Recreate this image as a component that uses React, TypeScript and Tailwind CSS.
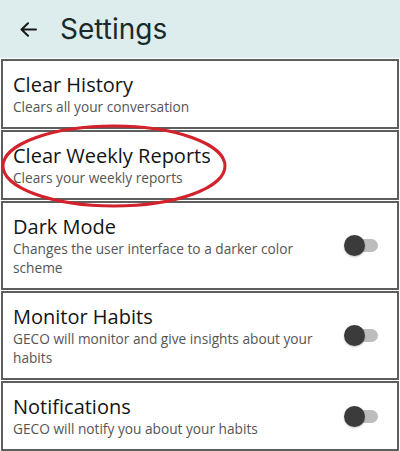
import React, { useState } from 'react';

type Setting = {
  title: string;
  desc: string;
  toggle?: boolean;
};

const settings: Setting[] = [
  { title: 'Clear History', desc: 'Clears all your conversation' },
  { title: 'Clear Weekly Reports', desc: 'Clears your weekly reports' },
  { title: 'Dark Mode', desc: 'Changes the user interface to a darker color scheme', toggle: true },
  { title: 'Monitor Habits', desc: 'GECO will monitor and give insights about your habits', toggle: true },
  { title: 'Notifications', desc: 'GECO will notify you about your habits', toggle: true },
];

const Toggle: React.FC<{ on: boolean; onChange: () => void }> = ({ on, onChange }) => (
  <button type="button" onClick={onChange} className="relative w-[34px] h-[21px] shrink-0">
    <span className="absolute left-[1px] right-0 top-[4px] h-[13px] rounded-full bg-[#bdbdbd]" />
    <span
      className={`absolute top-0 w-[21px] h-[21px] rounded-full bg-[#3b3b3b] shadow-[0_1px_2px_rgba(0,0,0,0.25)] ${
        on ? 'left-[13px]' : 'left-0'
      }`}
    />
  </button>
);

export default function App() {
  const [flags, setFlags] = useState<Record<string, boolean>>({});

  return (
    <div className="w-[400px] h-[451px] bg-white overflow-hidden relative" style={{ fontFamily: '"Open Sans", sans-serif' }}>
      <header className="h-[58px] bg-[#ddeded] flex items-center pl-5 gap-[23px]">
        <svg width="17" height="15" viewBox="0 0 17 15" fill="none" stroke="#1a1a1a" strokeWidth="2" strokeLinecap="round" strokeLinejoin="round">
          <path d="M16 7.5H1.5M8 1.2L1.5 7.5L8 13.8" />
        </svg>
        <h1 className="text-[28px] leading-none text-[#1c2929]" style={{ fontFamily: 'Inter, sans-serif' }}>
          Settings
        </h1>
      </header>

      <div className="flex flex-col gap-[1px] pt-[1px] px-[1px]">
        {settings.map((s) => (
          <div
            key={s.title}
            className="border-2 border-[#5e5e5e] flex items-center gap-3 pl-[10px] pr-[19px] pt-[11px] pb-[11px]"
          >
            <div className="flex-1 min-w-0">
              <div className="text-[20px] leading-[25px] text-[#141414]">{s.title}</div>
              <div className="text-[13.7px] leading-[19px] text-[#555555]">{s.desc}</div>
            </div>
            {s.toggle && (
              <Toggle
                on={!!flags[s.title]}
                onChange={() => setFlags((prev) => ({ ...prev, [s.title]: !prev[s.title] }))}
              />
            )}
          </div>
        ))}
      </div>

      <svg className="absolute left-0 top-[123px] pointer-events-none" width="232" height="88" viewBox="0 0 232 88" fill="none">
        <ellipse cx="114" cy="43" rx="111" ry="40" stroke="#d3222c" strokeWidth="3" />
      </svg>
    </div>
  );
}
